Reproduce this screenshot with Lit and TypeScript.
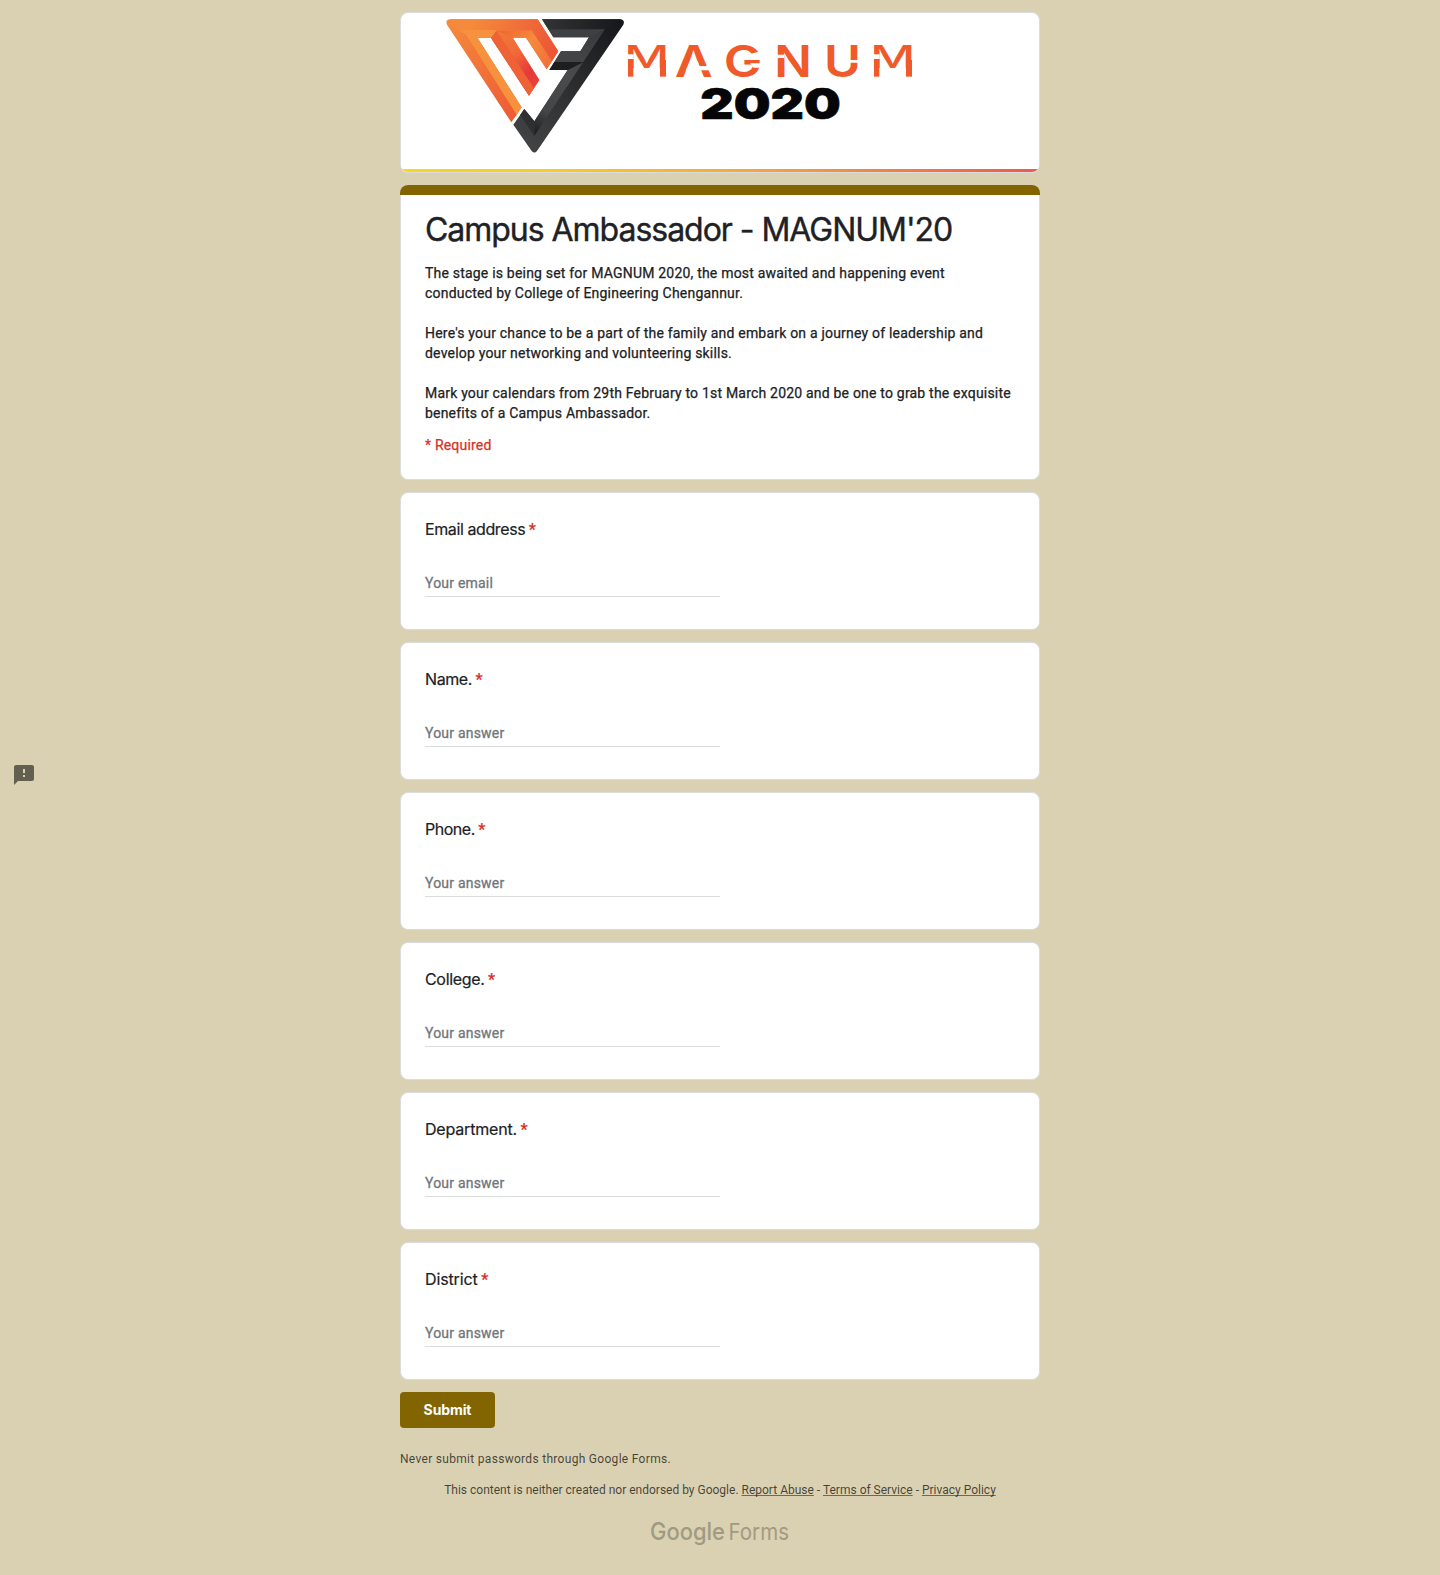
import { LitElement, html, css, svg } from "lit";
import { customElement, property } from "lit/decorators.js";

interface Field {
  label: string;
  hint: string;
  tracking: number;
}

const FIELDS: Field[] = [
  { label: "Email address", hint: "Your email", tracking: -0.4 },
  { label: "Name.", hint: "Your answer", tracking: -0.42 },
  { label: "Phone.", hint: "Your answer", tracking: -0.47 },
  { label: "College.", hint: "Your answer", tracking: -0.32 },
  { label: "Department.", hint: "Your answer", tracking: -0.18 },
  { label: "District", hint: "Your answer", tracking: -0.12 },
];

/* Wordmark letters at full height: glyph, left edge and drawn width, in logo units. */
const LETTERS: [string, number, number][] = [
  ["A", 854, 114],
  ["G", 1001, 116],
  ["N", 1153, 113],
  ["U", 1302, 111],
];

/* Left edges of the two wide letters, whose vertex stops above the baseline. */
const WIDE = [703, 1441];

@customElement("event-banner")
class EventBanner extends LitElement {
  static styles = css`
    :host {
      display: block;
    }
    .banner {
      box-sizing: border-box;
      height: 161px;
      border: 1px solid #dadce0;
      border-radius: 8px;
      background: #fff;
      overflow: hidden;
      display: flex;
      flex-direction: column;
      justify-content: space-between;
    }
    .art {
      display: block;
      width: 638px;
      height: 155px;
      flex: none;
    }
    .stripe {
      height: 3px;
      flex: none;
      background: linear-gradient(90deg, #f8d820 0%, #f7cb25 25%, #f3a73c 55%, #ea5a50 100%);
    }
    .word {
      font: 600 131px Inter, sans-serif;
      fill: #f05a2a;
    }
    .wide {
      font-weight: 500;
    }
    .year {
      font: 900 128px Inter, "Liberation Sans", sans-serif;
      fill: #060608;
      stroke: #060608;
      stroke-width: 2px;
    }
  `;

  render() {
    return html`<div class="banner">
      <svg class="art" viewBox="33 39 1914 465" aria-label="Magnum 2020">
        <defs>
          <linearGradient id="o1" gradientUnits="userSpaceOnUse" x1="180" y1="60" x2="400" y2="340">
            <stop offset="0" stop-color="#f58a3c" />
            <stop offset="1" stop-color="#ee5a35" />
          </linearGradient>
          <linearGradient id="o2" gradientUnits="userSpaceOnUse" x1="250" y1="60" x2="500" y2="150">
            <stop offset="0" stop-color="#f58a3c" />
            <stop offset="1" stop-color="#ec5537" />
          </linearGradient>
          <linearGradient id="o3" gradientUnits="userSpaceOnUse" x1="310" y1="110" x2="435" y2="250">
            <stop offset="0" stop-color="#f07a38" />
            <stop offset="0.45" stop-color="#f26838" />
            <stop offset="0.8" stop-color="#e53a38" />
            <stop offset="1" stop-color="#e8403a" />
          </linearGradient>
          <linearGradient id="o4" gradientUnits="userSpaceOnUse" x1="340" y1="95" x2="480" y2="195">
            <stop offset="0" stop-color="#f0692f" />
            <stop offset="0.5" stop-color="#f58a3c" />
            <stop offset="1" stop-color="#f0703a" />
          </linearGradient>
          <linearGradient id="k1" gradientUnits="userSpaceOnUse" x1="690" y1="70" x2="430" y2="440">
            <stop offset="0" stop-color="#17181b" />
            <stop offset="0.5" stop-color="#2b2c2e" />
            <stop offset="1" stop-color="#414244" />
          </linearGradient>
          <linearGradient id="k2" gradientUnits="userSpaceOnUse" x1="640" y1="95" x2="430" y2="400">
            <stop offset="0" stop-color="#38393b" />
            <stop offset="0.45" stop-color="#4b4b4c" />
            <stop offset="0.8" stop-color="#444547" />
            <stop offset="1" stop-color="#1c1d1f" />
          </linearGradient>
          <linearGradient id="k3" gradientUnits="userSpaceOnUse" x1="460" y1="70" x2="690" y2="70">
            <stop offset="0" stop-color="#323335" />
            <stop offset="1" stop-color="#17181b" />
          </linearGradient>
        </defs>

        <path
          fill="url(#o1)"
          d="M180 58H443L505 154L470 208L408 113H368L448 240L417 287L303 114H263L395 322L364 367L171 74Q165 60 180 58Z"
        />
        <path fill="url(#o2)" d="M180 58H443L505 154L486 184L425 90H205L180 58Z" />
        <path fill="#f6913e" d="M203 90H320L303 114H263L395 322L380 345L228 104Z" />
        <path fill="url(#o1)" d="M203 90L228 104L380 345L372 355Z" />
        <path fill="url(#o4)" d="M320 92H425L486 184L470 208L408 113H368L378 130Z" />
        <path fill="url(#o3)" d="M320 92L303 114L417 287L448 240L368 113Z" />
        <path fill="#ef6235" d="M320 92L303 114L417 287L431 264Z" />

        <path
          fill="url(#k1)"
          d="M456 58H693Q706 62 700 74L441 453Q433 462 425 453L370 374L403 327L433 364L533 210H478L513 154H571L597 112H490Z"
        />
        <path fill="url(#k3)" d="M456 58H693L645 88H475Z" />
        <path fill="#3f4042" d="M475 88H645L605 112H490Z" />
        <path fill="url(#k2)" d="M645 88L433 408V364L533 210L578 187L545 186L571 154L597 112Z" />
        <path fill="#434445" d="M513 154H571L578 187H493Z" />
        <path fill="#1d1e20" d="M493 186H580L533 210H478Z" />
        <path fill="#2e2f31" d="M403 327L433 364V408L391 344Z" />

        <g class="word">
          ${LETTERS.map(
            ([ch, x, w]) =>
              svg`<text x=${x} y="230" textLength=${w} lengthAdjust="spacingAndGlyphs">${ch}</text>`
          )}
          ${WIDE.map(
            (x) => svg`<g transform="translate(${x} 203) scale(1 0.715)">
              <text class="wide" textLength="135" lengthAdjust="spacingAndGlyphs">M</text>
            </g>
            <rect x=${x + 11} y="177" width="16" height="53" />
            <rect x=${x + 107} y="180" width="18" height="50" />
            <rect x=${x + 8} y="163" width="20" height="14" fill="#fff" />`
          )}
        </g>
        <g fill="#fff">
          <path d="M899 184H923L934 211H887Z" />
          <path d="M921 198H960V211H926Z" />
          <path d="M1155 164H1182V174H1155Z" />
          <path d="M1380 180H1410V188H1380Z" />
          <path d="M1080 162L1118 152V174H1070Z" />
          <path d="M1080 190H1118V203H1090Z" />
        </g>
        <text class="year" x="931" y="356" textLength="421" lengthAdjust="spacingAndGlyphs">2020</text>
      </svg>
      <div class="stripe"></div>
    </div>`;
  }
}

@customElement("question-card")
class QuestionCard extends LitElement {
  @property({ attribute: false }) field!: Field;

  static styles = css`
    :host {
      display: block;
    }
    .card {
      box-sizing: border-box;
      height: 138px;
      padding: 24px;
      border: 1px solid #dadce0;
      border-radius: 8px;
      background: #fff;
      display: flex;
      flex-direction: column;
    }
    .label {
      font: 400 16px/24px Inter, sans-serif;
      color: #202124;
      -webkit-text-stroke: 0.2px;
    }
    .star {
      font: 500 16px/20px Roboto, sans-serif;
      letter-spacing: 0;
      color: #d93025;
      margin-left: 3.5px;
    }
    .answer {
      box-sizing: border-box;
      width: 50%;
      height: 33px;
      margin-top: 23px;
      padding-top: 7px;
      border-bottom: 1px solid #dadce0;
      font: 400 14px/24px Roboto, sans-serif;
      letter-spacing: 0.2px;
      color: #70757a;
      -webkit-text-stroke: 0.3px;
    }
  `;

  render() {
    const f = this.field;
    return html`<div class="card">
      <div class="label">
        <span style="letter-spacing:${f.tracking}px">${f.label}</span><span class="star">*</span>
      </div>
      <div class="answer">${f.hint}</div>
    </div>`;
  }
}

@customElement("app-root")
class AppRoot extends LitElement {
  static styles = css`
    :host {
      display: block;
      min-height: 1575px;
      background: #dad1b2;
      font-family: Roboto, sans-serif;
      color: #202124;
    }
    .column {
      box-sizing: border-box;
      width: 640px;
      margin: 0 auto;
      padding-top: 12px;
      display: flex;
      flex-direction: column;
      gap: 12px;
    }
    .intro {
      box-sizing: border-box;
      height: 295px;
      border: 1px solid #dadce0;
      border-top: 0;
      border-radius: 8px;
      background: #fff;
      position: relative;
      padding: 25px 24px 0;
    }
    .accent {
      position: absolute;
      top: 0;
      left: -1px;
      right: -1px;
      height: 10px;
      border-radius: 8px 8px 0 0;
      background: #826500;
    }
    h1 {
      margin: 0;
      font: 400 32px/40px Inter, sans-serif;
      letter-spacing: -1.03px;
      -webkit-text-stroke: 0.4px;
      white-space: nowrap;
    }
    .about {
      margin-top: 13px;
      font-size: 14px;
      line-height: 20px;
      letter-spacing: 0.2px;
      -webkit-text-stroke: 0.25px;
      white-space: pre-line;
    }
    .required {
      margin-top: 12px;
      font-size: 14px;
      line-height: 20px;
      letter-spacing: 0.2px;
      -webkit-text-stroke: 0.25px;
      color: #d93025;
    }
    .submit {
      align-self: flex-start;
      width: 95px;
      height: 36px;
      padding: 0;
      border: 0;
      border-radius: 4px;
      background: #826500;
      color: #fff;
      font: 700 14px/36px Inter, sans-serif;
      letter-spacing: -0.1px;
      text-align: center;
    }
    .notice {
      margin-top: 10px;
      font-size: 12px;
      line-height: 18px;
      letter-spacing: 0.3px;
      color: rgba(0, 0, 0, 0.7);
    }
    .legal {
      margin-top: 1px;
      font-size: 12px;
      line-height: 18px;
      text-align: center;
      color: rgba(0, 0, 0, 0.7);
      white-space: nowrap;
    }
    .legal a {
      color: inherit;
      text-decoration: underline 1px rgba(0, 0, 0, 0.5);
      text-decoration-skip-ink: none;
      text-underline-offset: 1px;
    }
    .brand {
      align-self: center;
      display: block;
      width: 160px;
      height: 40px;
      margin-top: 1px;
      overflow: visible;
      fill: #a19a83;
      font-family: Inter, sans-serif;
    }
    .g {
      font-size: 24px;
      font-weight: 500;
    }
    .f {
      font-size: 22.5px;
      font-weight: 400;
    }
    .feedback {
      position: absolute;
      left: 12px;
      top: 763px;
      width: 24px;
      height: 24px;
      fill: #646051;
    }
  `;

  render() {
    return html`
      <main class="column">
        <event-banner></event-banner>
        <section class="intro">
          <div class="accent"></div>
          <h1>Campus Ambassador - MAGNUM'20</h1>
          <div class="about">${
            "The stage is being set for MAGNUM 2020, the most awaited and happening event conducted by College of Engineering Chengannur.\n\n" +
            "Here's your chance to be a part of the family and embark on a journey of leadership and develop your networking and volunteering skills.\n\n" +
            "Mark your calendars from 29th February to 1st March 2020 and be one to grab the exquisite benefits of a Campus Ambassador."
          }</div>
          <div class="required">* Required</div>
        </section>
        ${FIELDS.map((f) => html`<question-card .field=${f}></question-card>`)}
        <button class="submit">Submit</button>
        <div class="notice">Never submit passwords through Google Forms.</div>
        <div class="legal">This content is neither created nor endorsed by Google. <a>Report Abuse</a> - <a>Terms of Service</a> - <a>Privacy Policy</a></div>
        <svg class="brand" viewBox="-10 0 160 40">
          <text class="g" x="0" y="28" textLength="75" lengthAdjust="spacingAndGlyphs">Google</text>
          <text class="f" x="78.5" y="28" textLength="60.5" lengthAdjust="spacingAndGlyphs">Forms</text>
        </svg>
      </main>
      <svg class="feedback" viewBox="0 0 24 24">
        <path d="M20 2H4c-1.1 0-1.99.9-1.99 2L2 22l4-4h14c1.1 0 2-.9 2-2V4c0-1.1-.9-2-2-2zm-7 12h-2v-2h2v2zm0-4h-2V6h2v4z" />
      </svg>
    `;
  }
}
